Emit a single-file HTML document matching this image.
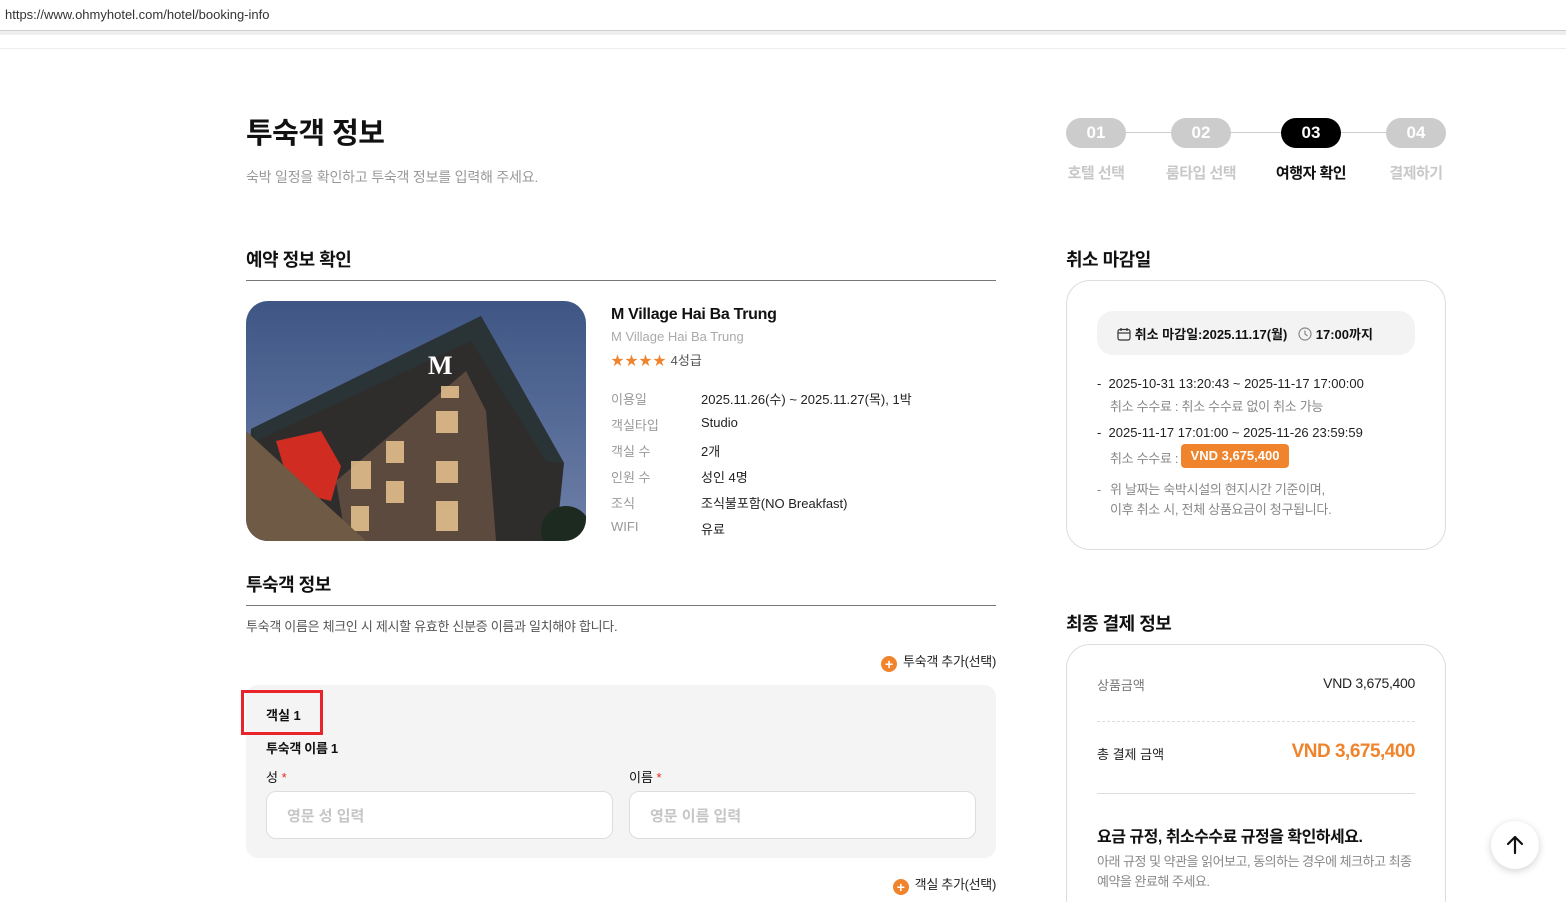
<!DOCTYPE html>
<html><head><meta charset="utf-8"><style>
*{margin:0;padding:0;box-sizing:border-box}
html,body{width:1566px;height:902px;overflow:hidden}
body{background:#fff;font-family:"Liberation Sans","Noto Sans CJK KR",sans-serif;color:#111;position:relative}
.a{position:absolute;white-space:nowrap}
.pill{position:absolute;top:118px;width:60px;height:30px;border-radius:15px;background:#ccc;color:#fff;font-weight:bold;font-size:17px;text-align:center;line-height:30px}
.step{position:absolute;top:162px;font-size:15px;color:#c8c8c8;font-weight:bold;width:120px;text-align:center;letter-spacing:-0.5px}
.lbl{left:611px;font-size:13px;color:#999}
.val{left:701px;font-size:13px;color:#222}
.inp{position:absolute;top:791px;width:347px;height:48px;border:1px solid #ddd;border-radius:10px;background:#fff;font-size:15px;color:#c6c6c6;padding:13px 20px;font-weight:bold}
.plus{display:inline-block;width:16px;height:16px;border-radius:50%;background:#f0842c;color:#fff;font-size:14px;line-height:16px;text-align:center;font-weight:bold;vertical-align:-3px;margin-right:6px}
</style></head><body>
<div class="a" style="left:0;top:0;width:1566px;height:31px;background:#fff;border-bottom:1px solid #d0d0d0"></div>
<div class="a" style="left:5px;top:7px;font-size:13px;color:#333">https://www.ohmyhotel.com/hotel/booking-info</div>
<div class="a" style="left:0;top:31px;width:1566px;height:4px;background:#eee"></div>
<div class="a" style="left:0;top:48px;width:1566px;height:1px;background:#eee"></div>

<div class="a" style="left:246px;top:110px;font-size:29px;font-weight:bold;letter-spacing:-0.5px">투숙객 정보</div>
<div class="a" style="left:246px;top:167px;font-size:14px;color:#999;letter-spacing:-0.2px">숙박 일정을 확인하고 투숙객 정보를 입력해 주세요.</div>

<div class="a" style="left:1096px;top:132px;width:320px;height:1px;background:#ccc"></div>
<div class="pill" style="left:1066px">01</div>
<div class="pill" style="left:1171px">02</div>
<div class="pill" style="left:1281px;background:#000">03</div>
<div class="pill" style="left:1386px">04</div>
<div class="step" style="left:1036px">호텔 선택</div>
<div class="step" style="left:1141px">룸타입 선택</div>
<div class="step" style="left:1251px;color:#111">여행자 확인</div>
<div class="step" style="left:1356px">결제하기</div>

<div class="a" style="left:246px;top:246px;font-size:18px;font-weight:bold;letter-spacing:-0.5px">예약 정보 확인</div>
<div class="a" style="left:246px;top:280px;width:750px;height:1px;background:#777"></div>
<div class="a" style="left:246px;top:301px;width:340px;height:240px;border-radius:22px;overflow:hidden">
<svg width="340" height="240" viewBox="0 0 340 240">
<defs><linearGradient id="s" x1="0" y1="0" x2="0" y2="1"><stop offset="0" stop-color="#3f5685"/><stop offset="1" stop-color="#6d80a8"/></linearGradient></defs>
<rect width="340" height="240" fill="url(#s)"/>
<polygon points="5,128 235,15 318,162 310,240 0,240" fill="#2f2c2c"/>
<polygon points="5,128 235,15 318,162 300,160 225,40 10,140" fill="#2a3436"/>
<polygon points="90,180 220,70 240,110 250,240 100,240" fill="#5c4a3e"/>
<g fill="#e8c48f" opacity=".85">
<rect x="105" y="160" width="20" height="28"/><rect x="140" y="140" width="18" height="22"/><rect x="190" y="110" width="22" height="22"/><rect x="190" y="160" width="22" height="22"/><rect x="140" y="180" width="18" height="22"/><rect x="190" y="200" width="22" height="30"/><rect x="105" y="205" width="18" height="25"/><rect x="195" y="85" width="18" height="12"/></g>
<polygon points="30,140 75,130 95,165 85,200 45,190" fill="#d12c22"/>
<polygon points="0,130 120,240 0,240" fill="#6e5a45"/>
<text x="182" y="73" font-family="Liberation Serif" font-weight="bold" font-size="26" fill="#fff">M</text>
<circle cx="320" cy="230" r="25" fill="#1d2a1f"/>
</svg></div>

<div class="a" style="left:611px;top:306px;font-size:16px;font-weight:bold;letter-spacing:-0.3px">M Village Hai Ba Trung</div>
<div class="a" style="left:611px;top:329px;font-size:13px;color:#aaa">M Village Hai Ba Trung</div>
<div class="a" style="left:611px;top:350px;font-size:13px;color:#555"><span style="color:#f0842c;letter-spacing:1px">★★★★</span> 4성급</div>
<div class="a lbl" style="top:389px">이용일</div><div class="a val" style="top:389px">2025.11.26(수) ~ 2025.11.27(목), 1박</div>
<div class="a lbl" style="top:415px">객실타입</div><div class="a val" style="top:415px">Studio</div>
<div class="a lbl" style="top:441px">객실 수</div><div class="a val" style="top:441px">2개</div>
<div class="a lbl" style="top:467px">인원 수</div><div class="a val" style="top:467px">성인 4명</div>
<div class="a lbl" style="top:493px">조식</div><div class="a val" style="top:493px">조식불포함(NO Breakfast)</div>
<div class="a lbl" style="top:519px">WIFI</div><div class="a val" style="top:519px">유료</div>

<div class="a" style="left:246px;top:571px;font-size:18px;font-weight:bold;letter-spacing:-0.5px">투숙객 정보</div>
<div class="a" style="left:246px;top:605px;width:750px;height:1px;background:#777"></div>
<div class="a" style="left:246px;top:616px;font-size:13px;color:#555;letter-spacing:-0.3px">투숙객 이름은 체크인 시 제시할 유효한 신분증 이름과 일치해야 합니다.</div>
<div class="a" style="right:570px;top:651px;font-size:13px;color:#222;letter-spacing:-0.3px"><span class="plus">+</span>투숙객 추가(선택)</div>
<div class="a" style="left:246px;top:685px;width:750px;height:173px;background:#f4f4f4;border-radius:12px"></div>
<div class="a" style="left:241px;top:690px;width:82px;height:45px;border:3px solid #e8242a"></div>
<div class="a" style="left:266px;top:705px;font-size:13px;font-weight:bold">객실 1</div>
<div class="a" style="left:266px;top:738px;font-size:13px;font-weight:bold;letter-spacing:-0.3px">투숙객 이름 1</div>
<div class="a" style="left:266px;top:767px;font-size:13px">성 <span style="color:#e22">*</span></div>
<div class="a" style="left:629px;top:767px;font-size:13px">이름 <span style="color:#e22">*</span></div>
<div class="inp" style="left:266px">영문 성 입력</div>
<div class="inp" style="left:629px">영문 이름 입력</div>
<div class="a" style="right:570px;top:874px;font-size:13px;color:#222;letter-spacing:-0.3px"><span class="plus">+</span>객실 추가(선택)</div>

<div class="a" style="left:1066px;top:246px;font-size:18px;font-weight:bold;letter-spacing:-0.5px">취소 마감일</div>
<div class="a" style="left:1066px;top:280px;width:380px;height:270px;border:1px solid #ddd;border-radius:24px"></div>
<div class="a" style="left:1097px;top:311px;width:318px;height:44px;background:#f3f3f3;border-radius:16px;font-size:13px;font-weight:bold;padding-top:13px;padding-left:20px">
<svg width="14" height="14" viewBox="0 0 14 14" style="vertical-align:-2px"><rect x="1" y="2.5" width="12" height="10.5" rx="2" fill="none" stroke="#333" stroke-width="1.2"/><line x1="1" y1="6" x2="13" y2="6" stroke="#333" stroke-width="1.2"/><line x1="4" y1="1" x2="4" y2="4" stroke="#333" stroke-width="1.2"/><line x1="10" y1="1" x2="10" y2="4" stroke="#333" stroke-width="1.2"/></svg> 취소 마감일:2025.11.17(월) &nbsp;&nbsp;<svg width="14" height="14" viewBox="0 0 14 14" style="vertical-align:-2px"><circle cx="7" cy="7" r="6" fill="none" stroke="#888" stroke-width="1.2"/><path d="M7 3.5V7l2.5 2" fill="none" stroke="#888" stroke-width="1.2"/></svg> 17:00까지</div>
<div class="a" style="left:1097px;top:376px;font-size:13px;color:#222">-&nbsp;&nbsp;2025-10-31 13:20:43 ~ 2025-11-17 17:00:00</div>
<div class="a" style="left:1110px;top:396px;font-size:13px;color:#888;letter-spacing:-0.3px">취소 수수료 : 취소 수수료 없이 취소 가능</div>
<div class="a" style="left:1097px;top:425px;font-size:13px;color:#222">-&nbsp;&nbsp;2025-11-17 17:01:00 ~ 2025-11-26 23:59:59</div>
<div class="a" style="left:1110px;top:448px;font-size:13px;color:#888;letter-spacing:-0.3px">취소 수수료 :</div>
<div class="a" style="left:1181px;top:444px;width:108px;height:24px;background:#f0842c;border-radius:4px;color:#fff;font-size:13px;font-weight:bold;text-align:center;line-height:24px">VND 3,675,400</div>
<div class="a" style="left:1097px;top:480px;font-size:13px;color:#888;line-height:20px;letter-spacing:-0.3px">-</div>
<div class="a" style="left:1110px;top:480px;font-size:13px;color:#888;line-height:20px;letter-spacing:-0.3px">위 날짜는 숙박시설의 현지시간 기준이며,<br>이후 취소 시, 전체 상품요금이 청구됩니다.</div>

<div class="a" style="left:1066px;top:610px;font-size:18px;font-weight:bold;letter-spacing:-0.5px">최종 결제 정보</div>
<div class="a" style="left:1066px;top:644px;width:380px;height:300px;border:1px solid #ddd;border-radius:24px"></div>
<div class="a" style="left:1097px;top:675px;font-size:13px;color:#777">상품금액</div>
<div class="a" style="right:151px;top:675px;font-size:14px;color:#222;letter-spacing:-0.3px">VND 3,675,400</div>
<div class="a" style="left:1097px;top:721px;width:318px;border-top:1px dashed #ddd"></div>
<div class="a" style="left:1097px;top:744px;font-size:13px;color:#222">총 결제 금액</div>
<div class="a" style="right:151px;top:741px;font-size:19px;color:#f0842c;font-weight:bold;letter-spacing:-0.5px">VND 3,675,400</div>
<div class="a" style="left:1097px;top:793px;width:318px;height:1px;background:#ddd"></div>
<div class="a" style="left:1097px;top:823px;font-size:16px;font-weight:bold;letter-spacing:-0.5px">요금 규정, 취소수수료 규정을 확인하세요.</div>
<div class="a" style="left:1097px;top:852px;font-size:13px;color:#888;line-height:20px;letter-spacing:-0.5px">아래 규정 및 약관을 읽어보고, 동의하는 경우에 체크하고 최종<br>예약을 완료해 주세요.</div>

<div class="a" style="left:1491px;top:821px;width:48px;height:48px;border-radius:50%;background:#fff;box-shadow:0 2px 8px rgba(0,0,0,.18)">
<svg width="48" height="48" viewBox="0 0 48 48"><path d="M24 32V16M17 23l7-7 7 7" fill="none" stroke="#111" stroke-width="2.2" stroke-linecap="round" stroke-linejoin="round"/></svg></div>
</body></html>
